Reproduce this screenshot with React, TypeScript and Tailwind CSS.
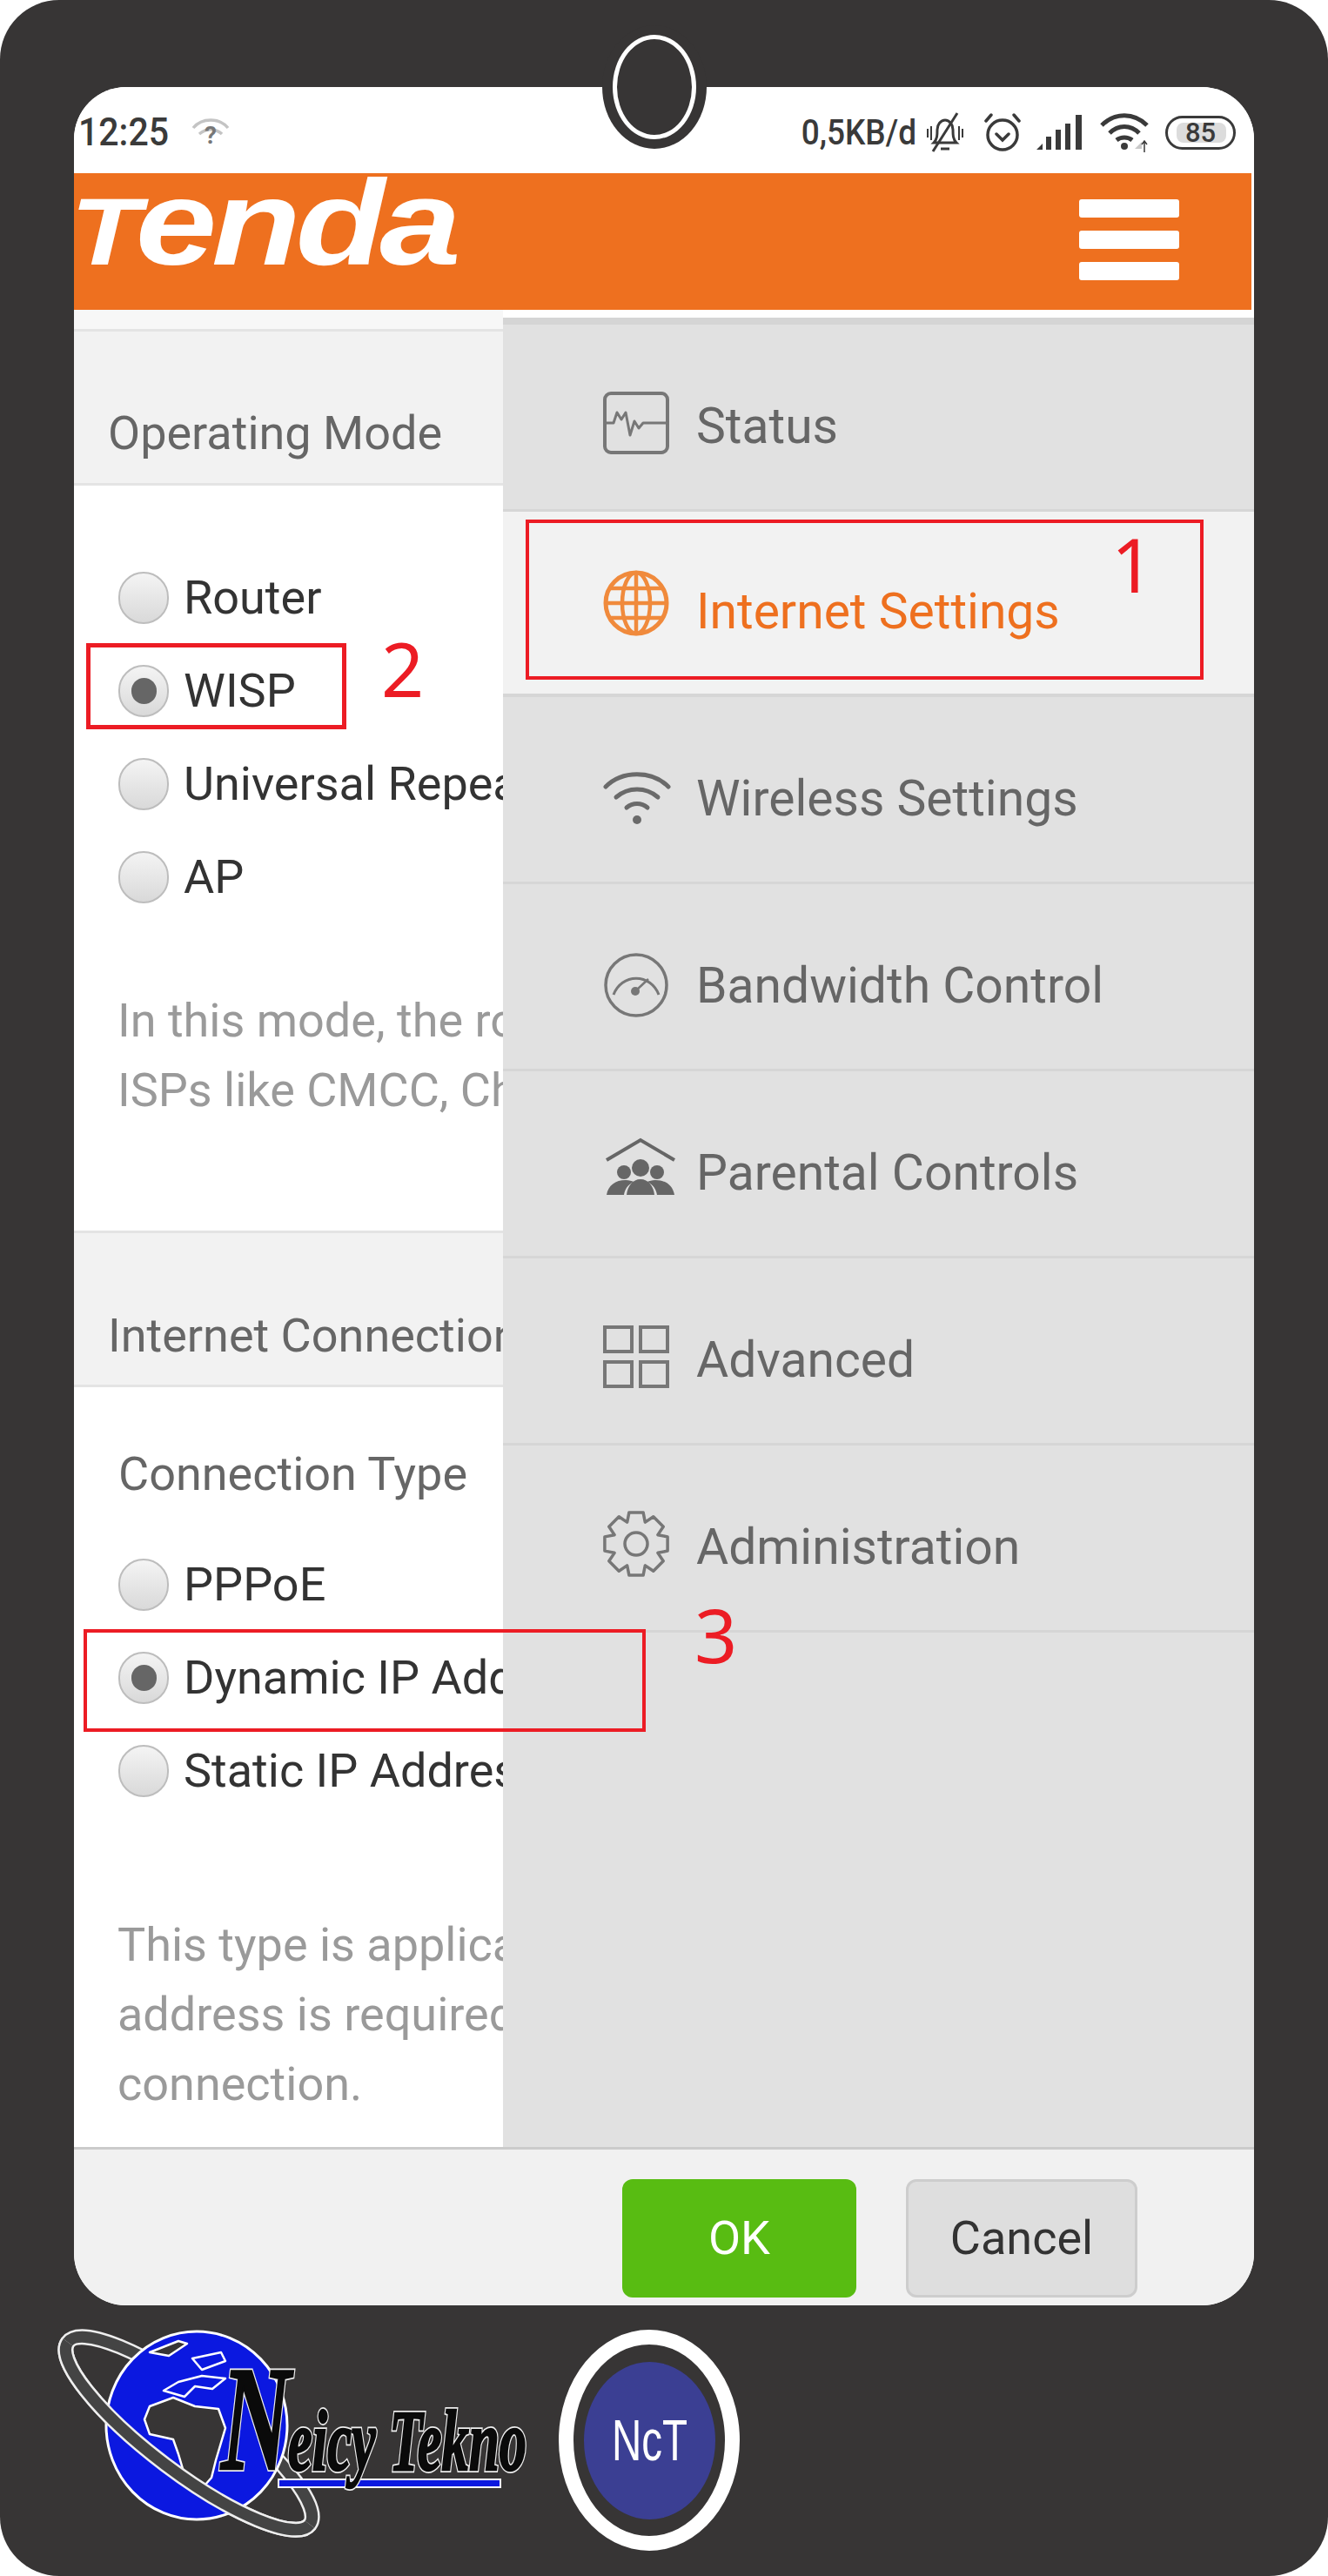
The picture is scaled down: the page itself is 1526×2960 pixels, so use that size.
const iconClass = "w-[76px] h-[78px] shrink-0";

// 8 tooth cog outline for the Administration row
const gearPath = () => {
  const pts: string[] = [];
  for (let i = 0; i < 8; i++) {
    const a = (i * Math.PI) / 4;
    const steps: [number, number][] = [
      [27, -0.39],
      [37, -0.22],
      [37, 0.22],
      [27, 0.39],
    ];
    steps.forEach(([r, d]) => {
      pts.push(`${(38 + r * Math.cos(a + d)).toFixed(1)} ${(39 + r * Math.sin(a + d)).toFixed(1)}`);
    });
  }
  return `M${pts.join("L")}Z`;
};

const StatusIcon = () => (
  <svg viewBox="0 0 76 72" className="w-[76px] h-[72px] shrink-0" fill="none" stroke="#777" strokeWidth="4">
    <rect x="2" y="2" width="72" height="68" rx="7" />
    <path d="M2 36h10l4-12 5 8 5-8 5 26 5-16 5 8 5-6 4 0h26" strokeWidth="3" strokeLinejoin="round" />
  </svg>
);

const GlobeIcon = () => (
  <svg viewBox="0 0 76 78" className={iconClass} fill="none" stroke="#f08a3c" strokeWidth="4.5">
    <circle cx="38" cy="39" r="35" strokeWidth="5" />
    <ellipse cx="38" cy="39" rx="16" ry="35" />
    <path d="M38 4v70M3 39h70M9 22h58M9 56h58" />
  </svg>
);

const WifiIcon = () => (
  <svg viewBox="0 0 78 62" className="w-[78px] h-[62px] shrink-0" fill="none" stroke="#6a6a6a" strokeWidth="5" strokeLinecap="round">
    <path d="M3 18C22 -1 56 -1 75 18" />
    <path d="M15 30c14-12 34-12 48 0" />
    <path d="M27 42c7-6 17-6 24 0" />
    <circle cx="39" cy="56" r="5" fill="#6a6a6a" stroke="none" />
  </svg>
);

const GaugeIcon = () => (
  <svg viewBox="0 0 76 78" className={iconClass} fill="none" stroke="#777" strokeWidth="3.5">
    <circle cx="38" cy="39" r="35" />
    <path d="M12 50A28 30 0 0 1 64 50" strokeWidth="3" />
    <path d="M38 45 52 32" strokeWidth="2.5" />
    <circle cx="37" cy="46" r="5" fill="#777" stroke="none" />
  </svg>
);

const ParentalIcon = () => (
  <svg viewBox="0 0 82 68" className="w-[82px] h-[68px] shrink-0 ml-[2px]" fill="#666">
    <path d="M2 26 41 3l39 23" fill="none" stroke="#666" strokeWidth="4" />
    <circle cx="22" cy="40" r="8" />
    <circle cx="60" cy="40" r="8" />
    <circle cx="41" cy="35" r="10" />
    <path d="M2 66c2-11 10-17 22-17 4 0 7 1 9 2-6 3-10 8-11 15z" />
    <path d="M80 66c-2-11-10-17-22-17-4 0-7 1-9 2 6 3 10 8 11 15z" />
    <path d="M25 66c1-10 7-18 16-18s15 8 16 18z" />
  </svg>
);

const GridIcon = () => (
  <svg viewBox="0 0 76 72" className="w-[76px] h-[72px] shrink-0" fill="none" stroke="#777" strokeWidth="4">
    <rect x="2" y="2" width="31" height="28" />
    <rect x="43" y="2" width="31" height="28" />
    <rect x="2" y="42" width="31" height="28" />
    <rect x="43" y="42" width="31" height="28" />
  </svg>
);

const GearIcon = () => (
  <svg viewBox="0 0 76 78" className={iconClass} fill="none" stroke="#777" strokeWidth="3.5" strokeLinejoin="round">
    <path d={gearPath()} />
    <circle cx="38" cy="39" r="13" />
  </svg>
);

const menu = [
  { label: "Status", icon: <StatusIcon />, shift: "-mt-[6px]" },
  { label: "Internet Settings", icon: <GlobeIcon />, active: true, shift: "-mt-[20px]" },
  { label: "Wireless Settings", icon: <WifiIcon />, shift: "" },
  { label: "Bandwidth Control", icon: <GaugeIcon />, shift: "" },
  { label: "Parental Controls", icon: <ParentalIcon />, shift: "-mt-[12px]" },
  { label: "Advanced", icon: <GridIcon />, shift: "-mt-[6px]" },
  { label: "Administration", icon: <GearIcon />, shift: "-mt-[6px]" },
];

const Radio = ({ label, checked }: { label: string; checked?: boolean }) => (
  <div className="flex items-center h-[107px] whitespace-nowrap text-[#333]">
    <span className="w-[58px] h-[60px] shrink-0 rounded-full border-2 border-[#bdbdbd] bg-gradient-to-b from-[#f4f4f4] to-[#d9d9d9] flex items-center justify-center">
      {checked && <span className="w-[29px] h-[30px] rounded-full bg-[#666]" />}
    </span>
    <span className="ml-[17px]">{label}</span>
  </div>
);

const Band = ({ title, pad }: { title: string; pad: string }) => (
  <div className={`h-[180px] shrink-0 bg-[#f2f2f2] border-y-[3px] border-[#e4e4e4] flex items-end pl-[39px] whitespace-nowrap text-[#666] ${pad}`}>
    {title}
  </div>
);

const StatusBar = () => (
  <div className="h-[99px] shrink-0 bg-white flex items-center justify-between pt-[5px] pl-[5px] pr-[21px] text-[#3a3a3a] font-medium">
    <div className="flex items-center gap-[26px]">
      <span className="text-[41px] scale-y-110">12:25</span>
      <svg viewBox="0 0 44 34" className="w-[44px] h-[34px]" fill="none" stroke="#c4c4c4" strokeWidth="3.5">
        <path d="M2 12C12 0 32 0 42 12" />
        <path d="M9 19c8-7 18-7 26 0" />
        <text x="22" y="30" fontSize="28" fontWeight="700" fill="#777" stroke="none" textAnchor="middle" fontFamily="Roboto">?</text>
      </svg>
    </div>
    <div className="flex items-center">
      <span className="text-[37px] scale-y-110">0,5KB/d</span>
      <svg viewBox="0 0 44 48" className="w-[44px] h-[48px] ml-[11px]" fill="none" stroke="#3a3a3a" strokeWidth="3">
        <path d="M9 36c4-4 4-9 4-15 0-6 4-11 9-11s9 5 9 11c0 6 0 11 4 15z" />
        <path d="M17 43h10M36 2 8 46" />
        <path d="M2 20v10M6 17v16M42 20v10M38 17v16" strokeWidth="2" />
      </svg>
      <svg viewBox="0 0 42 46" className="w-[42px] h-[46px] ml-[23px]" fill="none" stroke="#3a3a3a" strokeWidth="3.5" strokeLinecap="round">
        <circle cx="21" cy="26" r="17" />
        <path d="M14 25l7 7 7-7M2 10 8 3M40 10 34 3" />
      </svg>
      <svg viewBox="0 0 54 40" className="w-[54px] h-[40px] ml-[18px]" fill="#3a3a3a">
        <path d="M0 40l7-7v7zM11 40V25h6v15zM22 40V17h6v23zM33 40V10h6v30zM45 40V0h7v40z" />
      </svg>
      <svg viewBox="0 0 56 46" className="w-[56px] h-[46px] ml-[19px]" fill="none" stroke="#3a3a3a" strokeWidth="5">
        <path d="M2 15c15-15 37-15 52 0M11 24c10-10 24-10 34 0M19 32c5-4 13-4 18 0" />
        <circle cx="28" cy="39" r="4" fill="#3a3a3a" stroke="none" />
        <path d="M40 42l8-8v8z" fill="#c9c9c9" stroke="none" />
        <path d="M51 46V34M48 37l3-4 3 4" strokeWidth="1.5" />
      </svg>
      <div className="relative ml-[19px] w-[81px] h-[39px] rounded-full border-[3px] border-[#3a3a3a] flex items-center justify-center text-[31px] leading-none">
        <span className="absolute left-[10px] right-[8px] top-[5px] bottom-[5px] rounded-[8px] bg-[#dcdcdc]" />
        <span className="relative">85</span>
      </div>
    </div>
  </div>
);

const TendaHeader = () => (
  <div className="h-[157px] shrink-0 bg-[#ee701f] mr-[3px] flex items-center justify-between overflow-hidden">
    <div className="origin-left scale-x-[1.2] flex items-baseline italic font-bold text-white font-['Liberation_Sans',sans-serif] text-[140px] leading-none -ml-[4px] -mt-[44px] tracking-[-5px]">
      <span className="text-[110px]">T</span>
      <span>enda</span>
    </div>
    <div className="flex flex-col gap-[15px] mr-[83px] -mt-[4px]">
      <span className="block w-[115px] h-[21px] rounded-[3px] bg-white" />
      <span className="block w-[115px] h-[21px] rounded-[3px] bg-white" />
      <span className="block w-[115px] h-[21px] rounded-[3px] bg-white" />
    </div>
  </div>
);

const Sidebar = () => (
  <div className="absolute left-[493px] right-0 top-[9px] bottom-[182px] bg-[#e1e1e1] border-t-[8px] border-[#d5d5d5] text-[#666] text-[57px]">
    {menu.map((m) => (
      <div
        key={m.label}
        className={`flex items-center pl-[115px] pt-[20px] whitespace-nowrap ${
          m.active
            ? "h-[213px] bg-[#f2f2f2] border-b-[4px] border-[#d6d6d6] text-[#ee701f]"
            : "h-[215px] border-b-[3px] border-[#d6d6d6]"
        }`}
      >
        <span className={`w-[107px] shrink-0 flex items-center ${m.shift}`}>{m.icon}</span>
        <span>{m.label}</span>
      </div>
    ))}
  </div>
);

const NeicyLogo = () => (
  <svg viewBox="60 2670 560 250" className="w-[560px] h-[250px] shrink-0">
    <g fill="none" transform="rotate(37 213 2793)">
      <ellipse cx="218" cy="2793" rx="174" ry="45" stroke="#eee" strokeWidth="18" />
      <ellipse cx="218" cy="2793" rx="174" ry="45" stroke="#444" strokeWidth="13" />
    </g>
    <ellipse cx="226" cy="2787" rx="104" ry="108" fill="#0b18e0" stroke="#fff" strokeWidth="3" />
    <g fill="#373535" stroke="#fff" strokeWidth="2.5" strokeLinejoin="round">
      <path d="M166 2780l6-15 27-10 25 10 27 3 8 22-11 37-5 20-14 16-16-16-8-27-6-17-27-6z" />
      <path d="M188 2747l17-10 27-7 27 3-15 12-20-3-12 12z" fill="#0b18e0" />
      <path d="M172 2703l33-13 10 3-21 14z" />
      <path d="M221 2710l33-7 5 10-27 10z" fill="#0b18e0" />
    </g>
    <g fill="none" transform="rotate(37 213 2793)">
      <path d="M44 2793A174 45 0 0 0 392 2793" stroke="#eee" strokeWidth="18" />
      <path d="M44 2793A174 45 0 0 0 392 2793" stroke="#444" strokeWidth="13" />
    </g>
    <rect x="320" y="2849" width="255" height="9" fill="#0b18e0" stroke="#fff" strokeWidth="2" />
    <g fontFamily="'Liberation Serif', serif" fontWeight="700" fontStyle="italic">
      <g fill="none" stroke="#eee" strokeWidth="6">
        <text x="254" y="2837" fontSize="172" textLength="80" lengthAdjust="spacingAndGlyphs">N</text>
        <text x="331" y="2838" fontSize="100" textLength="274" lengthAdjust="spacingAndGlyphs">eicy Tekno</text>
      </g>
      <g fill="#0a0a0a" stroke="#0a0a0a" strokeWidth="2.5">
        <text x="254" y="2837" fontSize="172" textLength="80" lengthAdjust="spacingAndGlyphs">N</text>
        <text x="331" y="2838" fontSize="100" textLength="274" lengthAdjust="spacingAndGlyphs">eicy Tekno</text>
      </g>
    </g>
  </svg>
);

export default function App() {
  return (
    <div className="w-[1526px] h-[2960px] bg-white text-[54px] leading-none font-['Roboto',sans-serif]">
      <div className="relative h-full bg-[#373535] rounded-[68px] pt-[100px] overflow-hidden">
        {/* phone screen */}
        <div className="mx-[85px] h-[2549px] rounded-[60px] overflow-hidden flex flex-col bg-white">
          <StatusBar />
          <TendaHeader />
          <div className="relative flex-1 min-h-0 flex flex-col">
            <div className="w-[493px] flex-1 min-h-0 overflow-hidden flex flex-col bg-white">
              <div className="h-[22px] shrink-0 bg-[#f7f7f7]" />
              <Band title="Operating Mode" pad="pb-[30px]" />
              <div className="pl-[51px] pt-[75px] shrink-0">
                <Radio label="Router" />
                <Radio label="WISP" checked />
                <Radio label="Universal Repeater" />
                <Radio label="AP" />
              </div>
              <div className="pl-[50px] mt-[72px] h-[281px] shrink-0 leading-[80px] text-[#9a9a9a] whitespace-nowrap">
                <p>In this mode, the router can</p>
                <p>ISPs like CMCC, China Mobile</p>
              </div>
              <Band title="Internet Connection Settings" pad="pb-[29px]" />
              <div className="pl-[51px] pt-[73px] shrink-0 flex flex-col">
                <p className="text-[#666] h-[70px]">Connection Type</p>
                <div className="mt-[30px]">
                  <Radio label="PPPoE" />
                  <Radio label="Dynamic IP Address" checked />
                  <Radio label="Static IP Address" />
                </div>
                <div className="mt-[107px] -ml-[1px] leading-[80px] text-[#9a9a9a] whitespace-nowrap">
                  <p>This type is applicable when</p>
                  <p>address is required for your</p>
                  <p>connection.</p>
                </div>
              </div>
            </div>
            <Sidebar />
            <div className="relative h-[182px] shrink-0 bg-[#f1f1f1] border-t-[3px] border-[#cbcbcb] flex items-start gap-[57px] pl-[630px] pt-[34px]">
              <button className="w-[269px] h-[136px] rounded-[12px] bg-[#58bc12] text-white">OK</button>
              <button className="w-[266px] h-[136px] rounded-[12px] bg-[#dedede] border-[3px] border-[#cdcdcd] text-[#333]">Cancel</button>
            </div>
          </div>
        </div>

        {/* camera notch */}
        <div className="absolute left-[692px] top-[29px] w-[120px] h-[142px] rounded-[50%] bg-[#373535] flex items-center justify-center">
          <div className="w-[96px] h-[120px] rounded-[50%] border-[5px] border-white" />
        </div>

        {/* bottom logos */}
        <div className="flex items-start pl-[60px] pt-[21px]">
          <NeicyLogo />
          <div className="ml-[22px] mt-[7px] w-[208px] h-[254px] rounded-[50%] border-[17px] border-white flex items-center justify-center">
            <div className="w-[151px] h-[181px] rounded-[50%] bg-[#3b3f93] flex items-center justify-center text-white text-[66px] font-['Liberation_Sans',sans-serif]">
              <span className="scale-x-[.72]">NcT</span>
            </div>
          </div>
        </div>

        {/* red annotations */}
        <div className="absolute left-[604px] top-[597px] w-[779px] h-[184px] border-[4px] border-[#ec1c24]" />
        <div className="absolute left-[99px] top-[739px] w-[299px] h-[99px] border-[5px] border-[#ec1c24]" />
        <div className="absolute left-[96px] top-[1872px] w-[646px] h-[118px] border-[4px] border-[#ec1c24]" />
        <span className="absolute left-[1277px] top-[600px] text-[86px] leading-[96px] text-[#ec1c24] font-['Noto_Sans',sans-serif]">1</span>
        <span className="absolute left-[438px] top-[720px] text-[86px] leading-[96px] text-[#ec1c24] font-['Noto_Sans',sans-serif]">2</span>
        <span className="absolute left-[798px] top-[1830px] text-[86px] leading-[96px] text-[#ec1c24] font-['Noto_Sans',sans-serif]">3</span>
      </div>
    </div>
  );
}
